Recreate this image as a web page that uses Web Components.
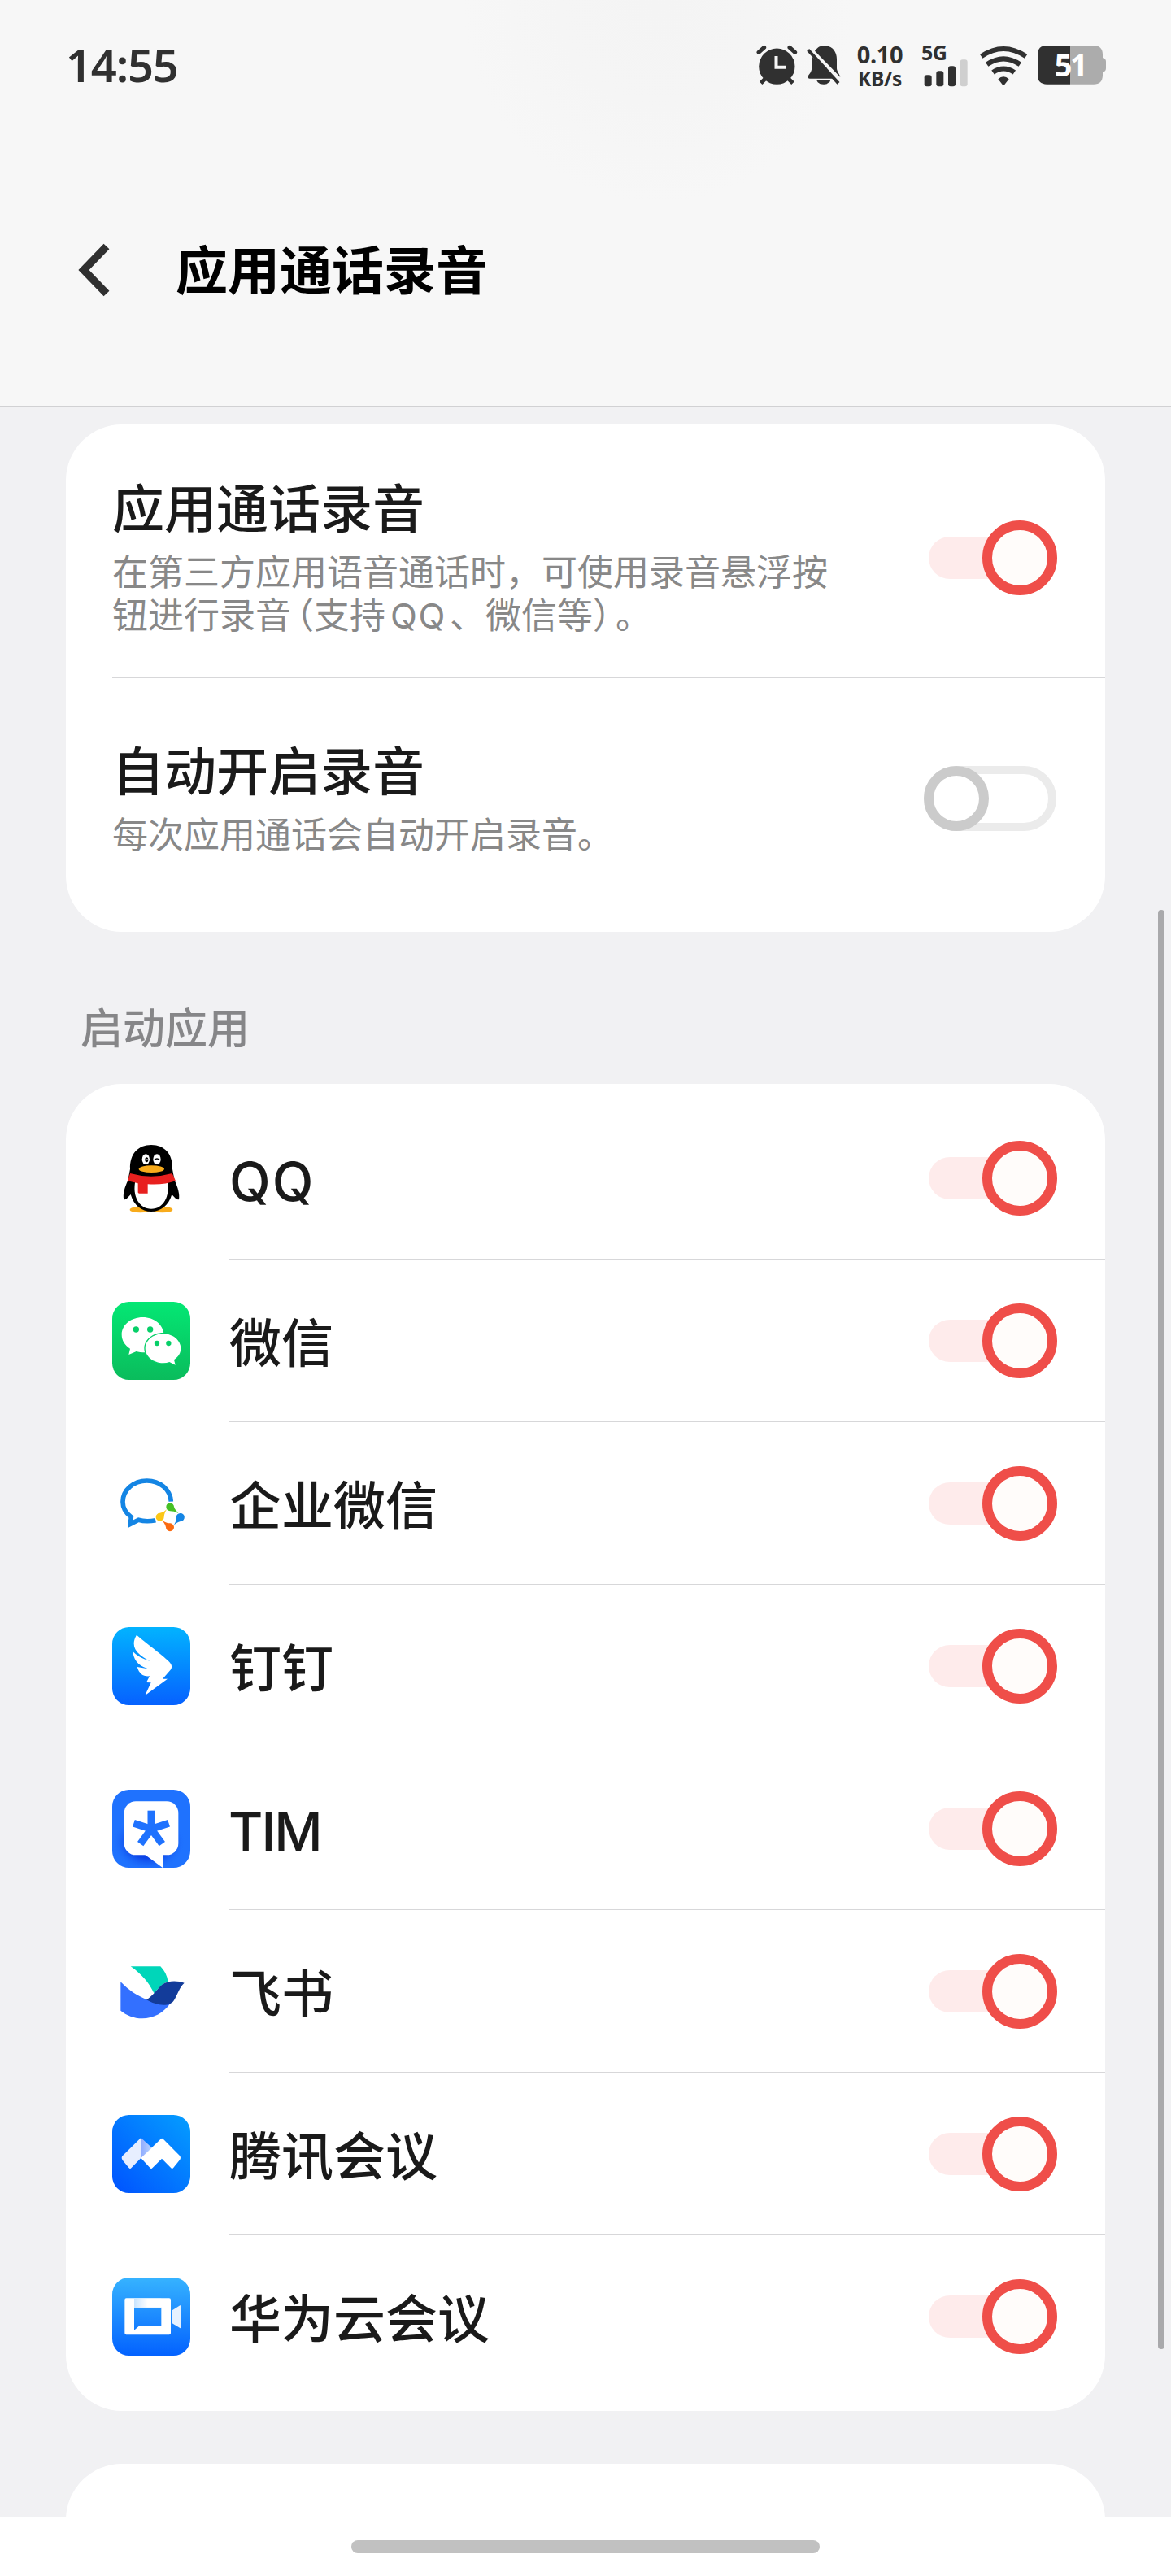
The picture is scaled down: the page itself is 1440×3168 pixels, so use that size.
<!DOCTYPE html>
<html lang="zh-CN">
<head>
<meta charset="utf-8">
<title>应用通话录音</title>
<style>
html,body{margin:0;padding:0}
body{width:1440px;height:3168px;overflow:hidden;background:#f1f1f3;font-family:"Noto Sans CJK SC",sans-serif;color:#1a1a1a}
</style>
</head>
<body>
<call-record-page></call-record-page>
<script>
const define=(name,html,after)=>customElements.define(name,class extends HTMLElement{
  constructor(){super();this.attachShadow({mode:'open'}).innerHTML=html;}
  connectedCallback(){if(after)after(this,this.shadowRoot);}
});

define('status-bar',`<style>
:host{display:flex;justify-content:space-between;height:160px;padding:0 80px 0 81px;box-sizing:border-box;font-family:"Noto Sans",sans-serif;color:#303030}
svg{display:block;flex:none}
.time{font-size:56px;font-weight:600;line-height:80px;margin-top:39px;letter-spacing:-1.2px}
.right{display:flex;align-items:flex-start;padding-top:50px;font-weight:700}
.speed{width:60px;margin:1px 21px 0 17px;display:flex;flex-direction:column;align-items:center;white-space:nowrap}
.n{font-size:29px;line-height:31px;letter-spacing:-.4px}.k{font-size:24.5px;line-height:29px;letter-spacing:-.3px}
.sig{width:58px;display:flex;flex-direction:column;margin-right:13px}
.g{font-size:25px;line-height:28px;height:23px;letter-spacing:-.6px}
.bat{width:84px;height:60px;display:grid;margin-left:12px}
.bat>*{grid-area:1/1}
.bat span{font-size:38px;line-height:58px;color:#fff;width:80px;text-align:center;letter-spacing:-2.5px}
</style>
<div class="time">14:55</div>
<div class="right">
<svg width="52" height="60" viewBox="89 60 156 180"><g stroke="#303030" stroke-width="15" stroke-linecap="round" fill="none"><path d="M98 103L118 85M232 103L212 85"/><path stroke-linecap="butt" d="M106 217L124 199M224 217L206 199"/></g><circle cx="165" cy="155" r="66.5" fill="#303030"/><path d="M162.500 117V158.500H198" fill="none" stroke="#f7f7f7" stroke-width="12"/></svg>
<svg width="44" height="60" viewBox="272 60 132 180" style="margin-left:9px"><path fill="#303030" d="M305 98C315 84 326 78 340 78C368 78 386 99 386 128V163C387 175 396 182 399 195Z"/><path fill="#303030" d="M295 119L375 200H286C279 200 278 193 281 189C288 180 293 174 294 160ZM312 207H360C364 207 361 211 357 214C347 224 326 224 316 214Z"/><path d="M280 94L392 217" stroke="#303030" stroke-width="12"/></svg>
<div class="speed"><span class="n">0.10</span><span class="k">KB/s</span></div>
<div class="sig"><span class="g">5G</span><svg width="58" height="34" viewBox="700 125 174 102"><g fill="#303030"><rect x="711" y="183" width="27" height="42" rx="9"/><rect x="755" y="168" width="27" height="57" rx="9"/><rect x="799" y="150" width="27" height="75" rx="9"/></g><rect x="843" y="126" width="27" height="99" rx="9" fill="#cfcfcf"/></svg></div>
<svg width="60" height="60" viewBox="912 60 180 180"><g fill="none" stroke="#303030" stroke-width="18"><path d="M920 118Q1002 62 1085 118"/><path d="M941 148Q1002 106 1063 148"/><path d="M963 177Q1002 150 1042 177"/></g><path fill="#303030" d="M982 202Q1002 184 1022 202L1006 222Q1002 227 998 222Z"/></svg>
<div class="bat"><svg width="84" height="60" viewBox="1128 60 252 180"><path fill="#acacac" d="M1248 78H1335Q1367 78 1368 110V124Q1380 126 1380 137V162Q1380 174 1368 176V188Q1367 221 1335 221H1248Z"/><path fill="#303030" d="M1248 78H1162Q1128 78 1128 112V187Q1128 221 1162 221H1248Z"/></svg><span>51</span></div>
</div>`);

define('page-header',`<style>
:host{display:block;height:500px;box-sizing:border-box;border-bottom:1px solid #d1d1d3;background:radial-gradient(circle at 810px 10px,#f4f4f4 0,#f5f5f5 120px,#f7f7f7 240px) #f7f7f7}
.bar{display:flex;align-items:center;height:344px;padding-left:92px}
svg{display:block}
h1{margin:0 0 0 76px;padding-bottom:9px;font-size:64px;line-height:90px;font-weight:700;color:#000}
</style><status-bar></status-bar><div class="bar"><svg width="48" height="70" viewBox="0 0 48 70"><path d="M39 6L11 35L39 64" fill="none" stroke="#303030" stroke-width="9.500"/></svg><h1><slot></slot></h1></div>`);

define('toggle-switch',`<style>
:host{display:flex;align-items:center;flex:none;box-sizing:border-box;width:158px;height:52px;border-radius:26px;background:linear-gradient(90deg,#feebeb 110px,transparent 110px);justify-content:flex-end}
i{display:block;box-sizing:border-box;flex:none;width:92px;height:92px;border-radius:50%;border:12px solid #ef4e49;background:#fffcfa}
:host([off]){width:163px;height:80px;border-radius:40px;background:#fff;border:10px solid #ebebeb;justify-content:flex-start;margin-right:1px}
:host([off]) i{width:80px;height:80px;border-color:#cbcbcb;background:#fff;margin-left:-10px}
</style><i></i>`);

define('settings-card',`<style>
:host{display:block;box-sizing:border-box;margin:0 81px;padding:16px 0;border-radius:69px;background:#fff;overflow:hidden}
</style><slot></slot>`);

define('setting-row',`<style>
:host{display:flex;box-sizing:border-box;height:296px;margin-left:57px;padding-right:59px;align-items:center;justify-content:space-between}
:host([line]){border-bottom:1px solid #d7d7d9}
.t{padding-bottom:8px}
.h{font-size:64px;line-height:86px;font-weight:500;margin:-2px 0 15px 0}
.d{font-size:44px;line-height:52px;color:#888;white-space:nowrap;font-family:Roboto,"Noto Sans CJK SC",sans-serif}
</style><div class="t"><div class="h"><slot name="title"></slot></div><div class="d"><slot></slot></div></div><slot name="toggle"></slot>`);

const grad=(id,a,b,dir='x1="0" y1="0" x2="0" y2="1"')=>`<defs><linearGradient id="${id}" ${dir}><stop stop-color="${a}"/><stop offset="1" stop-color="${b}"/></linearGradient></defs><rect width="288" height="288" rx="62" fill="url(#${id})"/>`;
const arms=[0,72,144,216,288].map(a=>`<rect x="130.500" y="77" width="27" height="68" transform="rotate(${a} 144 145)"/>`).join('');
const icons={
qq:`<ellipse cx="103" cy="260" rx="38" ry="11" fill="#f8ab1b"/><ellipse cx="185" cy="260" rx="38" ry="11" fill="#f8ab1b"/>
<path d="M58 152C46 176 38 204 43 222C50 226 60 212 68 204C80 244 108 267 144 267S208 244 220 204C228 212 238 226 246 222C250 204 242 176 230 152L222 110C224 56 194 21 144 21S64 56 66 110Z" fill="#000"/>
<path d="M86 150H202C216 212 188 257 144 257S72 212 86 150Z" fill="#fff"/>
<path d="M66 126Q144 148 221 126L234 154Q190 170 131 166V200H100Q94 200 95 192V163L57 154Z" fill="#e8201f"/>
<ellipse cx="124" cy="74" rx="14" ry="19" fill="#fff"/><ellipse cx="165" cy="74" rx="14" ry="19" fill="#fff"/><ellipse cx="127" cy="76" rx="6" ry="9"/><circle cx="129" cy="74" r="2" fill="#fff"/><path d="M156 76Q165 68 174 76" fill="none" stroke="#000" stroke-width="4"/>
<ellipse cx="145" cy="110" rx="47" ry="13" fill="#f8ab1b"/>`,
wechat:grad('w','#04e774','#0abc5c')+`<path fill="#fff" d="M113 57C69 57 35 85 35 121C35 143 47 161 66 173L61 195L89 183Q100 187 124 187L191 122C189 84 154 57 113 57Z"/><path d="M188 114C149 114 118 140 118 172S149 230 188 230Q202 230 214 226L234 236L230 217C247 206 257 190 257 172C257 140 227 114 188 114Z" fill="#07cf68"/><path fill="#fff" d="M188 118C152 118 122 142 122 172S152 226 188 226Q201 226 211 222L233 233L228 214C244 203 253 189 253 172C253 142 224 118 188 118Z"/><g fill="#07cf68"><circle cx="88" cy="102" r="11"/><circle cx="140" cy="102" r="11"/><circle cx="165" cy="153" r="9.500"/><circle cx="208" cy="153" r="9.500"/></g>`,
wecom:`<path d="M217 137C214 92 176 60 128 60C77 60 39 95 39 138C39 161 51 180 70 194L67 220L97 205Q126 213 160 206" fill="none" stroke="#1485e4" stroke-width="17"/>
<g><path fill="#46c024" d="M199 157A14.500 14.500 0 1 1 228 156C230 166 238 172 244 180C232 174 222 172 213 172A14.500 14.500 0 0 1 199 157Z"/>
<path fill="#1485e4" d="M251 180A15 15 0 1 1 252 210C242 212 236 218 228 223C233 214 236 208 236 196A15 15 0 0 1 251 180Z"/>
<path fill="#fb6a10" d="M228 232A15 15 0 1 1 198 232C196 222 191 216 185 207C196 214 203 217 214 217A15 15 0 0 1 228 232Z"/>
<path fill="#fbc716" d="M176 209A15 15 0 1 1 176 179C187 178 193 173 201 166C195 175 192 183 191 194A15 15 0 0 1 176 209Z"/></g>`,
ding:grad('d','#02b3ff','#0661ff')+`<path fill="#fff" d="M90 29C120 56 172 92 208 126C220 137 222 147 216 157L186 191H204L121 252L143 205L126 204L138 181C114 183 100 173 92 147L140 155C106 148 80 130 76 90C97 112 120 118 142 127C103 108 60 78 90 29Z"/>`,
tim:`<defs><clipPath id="c"><rect width="288" height="288" rx="62"/></clipPath><radialGradient id="s"><stop offset=".55" stop-color="#0c43e6"/><stop offset="1" stop-color="#1f72fe" stop-opacity="0"/></radialGradient></defs><g clip-path="url(#c)"><rect width="288" height="288" fill="#1f72fe"/><ellipse cx="134" cy="195" rx="135" ry="105" fill="url(#s)"/><rect x="44" y="43" width="200" height="198" rx="43" fill="#fff"/><path d="M120 239L186 288V239Z" fill="#fff"/></g><g fill="#1f72fe">${arms}</g>`,
feishu:`<path fill="#00d6b9" d="M68 52H178C193 67 202 85 206 108C186 114 171 133 154 151C135 110 106 78 68 52Z"/><path fill="#3370ff" d="M31 109C60 139 91 160 128 175L216 186C190 224 151 244 111 244C80 244 52 232 31 215Z"/><path fill="#133c9a" d="M266 113C249 127 240 157 228 177C210 205 160 195 126 175C150 160 164 137 184 119C208 103 240 104 266 113Z"/>`,
tencent:grad('t','#0052ff','#059eff','x1="0" y1="1" x2="1" y2="0"')+`<defs><linearGradient id="f"><stop stop-color="#8fabff"/><stop offset="1" stop-color="#b9d4ff"/></linearGradient></defs><path fill="url(#f)" d="M106 84L146 121L107 161Z"/><path fill="#e7eeff" d="M106 84V159L70 196Q66 201 62 196L39 168Q31 158 39 150Z"/><path fill="#fff" d="M180 88Q183 84 187 88L248 149Q256 158 248 167L225 196Q221 201 217 196L183 161L148 196Q144 201 140 196L106 159Z"/>`,
huawei:grad('h','#36b3ff','#0362ff')+`<defs><linearGradient id="v"><stop stop-color="#c8e4ff"/><stop offset=".5" stop-color="#fff"/></linearGradient></defs><path fill="#fff" fill-rule="evenodd" d="M52 76H210Q216 76 216 82V205Q216 211 210 211H52Q46 211 46 205V82Q46 76 52 76ZM81 110V194L101 177H181V110Z"/><path fill="url(#v)" d="M81 77H181V110H81Z"/><path fill="#e5f1ff" d="M219 122L250 103Q254 101 254 106V183Q254 188 250 186L219 167Z"/>`};
define('app-icon',`<style>:host{display:block;width:96px;height:96px;flex:none}svg{display:block}</style>`,(el,root)=>{
  if(!root.querySelector('svg'))root.innerHTML+=`<svg width="96" height="96" viewBox="0 0 288 288">${icons[el.getAttribute('name')]}</svg>`;
});

define('app-row',`<style>
:host{display:flex;height:200px;padding-left:57px;align-items:stretch}
app-icon{margin:52px 48px 0 0}
.b{flex:1;box-sizing:border-box;display:flex;align-items:center;justify-content:space-between;padding-right:59px;border-bottom:1px solid #d7d7d9}
.n{font-size:64px;line-height:90px;font-weight:500;padding:0 0 3px 0}
:host(:last-child) .b{border-color:transparent}
:host([latin]) .n{font-family:Inter,"Noto Sans CJK SC",sans-serif;font-size:66px;padding:9px 0 0;letter-spacing:2px}
:host([icon="tim"]) .n{font-size:65px;letter-spacing:-2px;margin-left:-1px}
</style><app-icon></app-icon><div class="b"><div class="n"><slot></slot></div><toggle-switch></toggle-switch></div>`,(el,root)=>{
  const icon=root.querySelector('app-icon'),fresh=document.createElement('app-icon');
  fresh.setAttribute('name',el.getAttribute('icon'));icon.replaceWith(fresh);
});

define('scroll-thumb',`<style>:host{display:block;position:absolute;left:1424px;top:1119px;width:8px;height:1770px;border-radius:4px;background:#a9a9ab}</style>`);
define('nav-pill',`<style>:host{display:flex;flex:none;height:72px;background:#fff;justify-content:center;align-items:center}i{display:block;width:576px;height:16px;border-radius:8px;background:#c1c1c1}</style><i></i>`);

define('call-record-page',`<style>
:host{display:flex;flex-direction:column;position:relative;width:1440px;height:3168px;background:#f1f1f3}
page-header{flex:none}
main{flex:1;min-height:0;overflow:hidden;padding-top:22px}
.label{height:187px;padding-left:99px;font-size:52px;line-height:231px;font-weight:500;color:#868688}
.next{margin-top:65px;height:140px}
.lp,.rp{font-feature-settings:"halt"}
.lp{margin-left:6px}.rp{margin-right:6px}
.q{font-family:Inter,sans-serif;font-size:43px;margin:0 4px 0 6px;letter-spacing:1.6px}
setting-row{text-spacing-trim:space-all}
</style>
<page-header>应用通话录音</page-header>
<main>
<settings-card>
<setting-row line><span slot="title">应用通话录音</span>在第三方应用语音通话时，可使用录音悬浮按<br>钮进行录音<span class="lp">（</span>支持<span class="q">QQ</span>、微信等<span class="rp">）</span>。<toggle-switch slot="toggle"></toggle-switch></setting-row>
<setting-row><span slot="title">自动开启录音</span>每次应用通话会自动开启录音。<toggle-switch slot="toggle" off></toggle-switch></setting-row>
</settings-card>
<div class="label">启动应用</div>
<settings-card>
<app-row icon="qq" latin>QQ</app-row>
<app-row icon="wechat">微信</app-row>
<app-row icon="wecom">企业微信</app-row>
<app-row icon="ding">钉钉</app-row>
<app-row icon="tim" latin>TIM</app-row>
<app-row icon="feishu">飞书</app-row>
<app-row icon="tencent">腾讯会议</app-row>
<app-row icon="huawei">华为云会议</app-row>
</settings-card>
<settings-card class="next"></settings-card>
</main>
<nav-pill></nav-pill>
<scroll-thumb></scroll-thumb>`);
</script>
</body>
</html>
